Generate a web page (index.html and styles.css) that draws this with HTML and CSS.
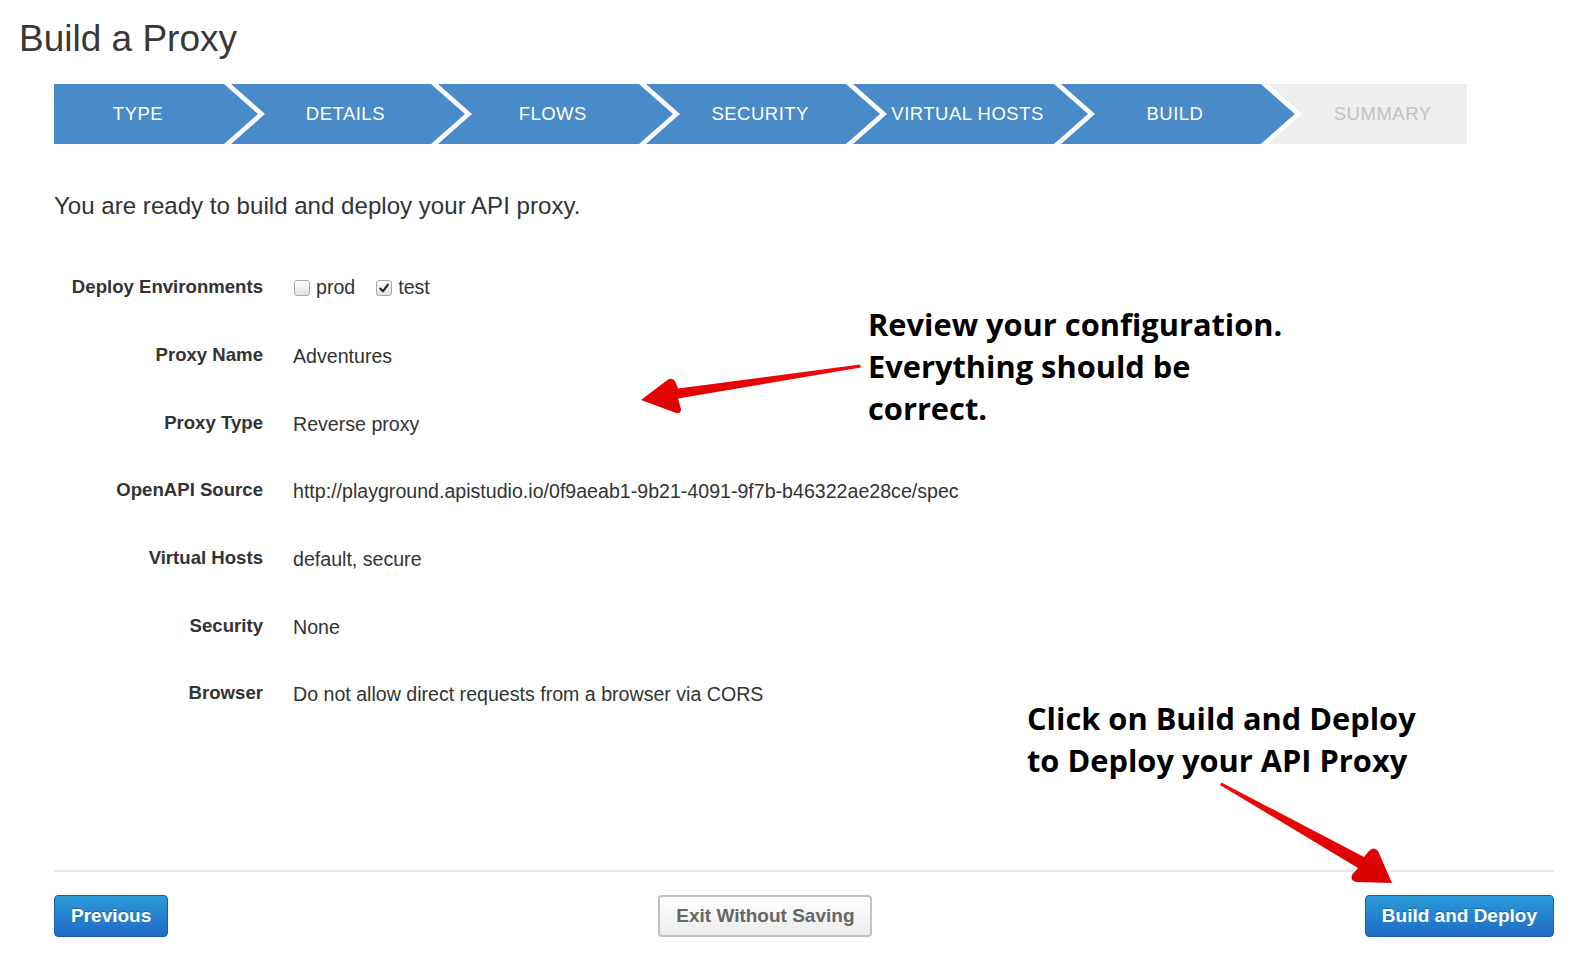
FILE: index.html
```html
<!DOCTYPE html>
<html>
<head>
<meta charset="utf-8">
<title>Build a Proxy</title>
<link rel="stylesheet" href="styles.css">
</head>
<body>
<div class="page">
  <h1 class="title">Build a Proxy</h1>
  <div class="content">
    <div class="wizard">
      <div class="step">TYPE<svg class="chev" viewBox="0 0 44 60" width="44" height="60"><polygon class="next-blue" points="0,0 44,0 44,60 0,60 34,30"/><polygon class="stripe" points="0,0 7,0 41,30 7,60 0,60 34,30"/></svg></div>
      <div class="step">DETAILS<svg class="chev" viewBox="0 0 44 60" width="44" height="60"><polygon class="next-blue" points="0,0 44,0 44,60 0,60 34,30"/><polygon class="stripe" points="0,0 7,0 41,30 7,60 0,60 34,30"/></svg></div>
      <div class="step">FLOWS<svg class="chev" viewBox="0 0 44 60" width="44" height="60"><polygon class="next-blue" points="0,0 44,0 44,60 0,60 34,30"/><polygon class="stripe" points="0,0 7,0 41,30 7,60 0,60 34,30"/></svg></div>
      <div class="step">SECURITY<svg class="chev" viewBox="0 0 44 60" width="44" height="60"><polygon class="next-blue" points="0,0 44,0 44,60 0,60 34,30"/><polygon class="stripe" points="0,0 7,0 41,30 7,60 0,60 34,30"/></svg></div>
      <div class="step">VIRTUAL HOSTS<svg class="chev" viewBox="0 0 44 60" width="44" height="60"><polygon class="next-blue" points="0,0 44,0 44,60 0,60 34,30"/><polygon class="stripe" points="0,0 7,0 41,30 7,60 0,60 34,30"/></svg></div>
      <div class="step">BUILD<svg class="chev" viewBox="0 0 44 60" width="44" height="60"><polygon class="next-gray" points="0,0 44,0 44,60 0,60 34,30"/><polygon class="stripe" points="0,0 7,0 41,30 7,60 0,60 34,30"/></svg></div>
      <div class="step step-todo">SUMMARY</div>
    </div>

    <p class="intro">You are ready to build and deploy your API proxy.</p>

    <div class="summary">
      <div class="label">Deploy Environments</div>
      <div class="value envs">
        <span class="cb"></span><span class="cb-text">prod</span>
        <span class="cb cb-on"><svg viewBox="0 0 14 14" width="14" height="14"><path d="M3.3 7.5 L5.9 10.3 L10.9 3.6" fill="none" stroke="#222" stroke-width="2.1" stroke-linecap="round" stroke-linejoin="round"/></svg></span><span class="cb-text">test</span>
      </div>
      <div class="label">Proxy Name</div>
      <div class="value">Adventures</div>
      <div class="label">Proxy Type</div>
      <div class="value">Reverse proxy</div>
      <div class="label">OpenAPI Source</div>
      <div class="value">http://playground.apistudio.io/0f9aeab1-9b21-4091-9f7b-b46322ae28ce/spec</div>
      <div class="label">Virtual Hosts</div>
      <div class="value">default, secure</div>
      <div class="label">Security</div>
      <div class="value">None</div>
      <div class="label">Browser</div>
      <div class="value">Do not allow direct requests from a browser via CORS</div>
    </div>

    <div class="footer">
      <button class="btn btn-primary">Previous</button>
      <button class="btn btn-default btn-exit">Exit Without Saving</button>
      <button class="btn btn-primary btn-deploy">Build and Deploy</button>
    </div>
  </div>

  <div class="note note-review">Review your configuration.<br>Everything should be<br>correct.</div>
  <div class="note note-click">Click on Build and Deploy<br>to Deploy your API Proxy</div>

  <svg class="arrows" viewBox="0 0 1574 970" width="1574" height="970">
    <defs>
      <linearGradient id="redg" x1="0" y1="0" x2="0" y2="1">
        <stop offset="0" stop-color="#f00a0a"/>
        <stop offset="1" stop-color="#d80000"/>
      </linearGradient>
    </defs>
    <path fill="url(#redg)" d="M860,364.5 L678,388.5 L676,383 Q673,377 668,379.5 L641,400 L675,412.5 Q681,414.5 681,409 L678,398.5 L861,367.5 Z"/>
    <path fill="url(#redg)" d="M1221.5,782.5 L1364,857 L1369,851 Q1374,846 1378,851 L1392,883 L1357,882 Q1350,881 1352,875 L1358,868 L1220,785 Z"/>
  </svg>
</div>
</body>
</html>
```

FILE: styles.css
```css
html, body {
  margin: 0;
  padding: 0;
  background: #ffffff;
}

.page {
  position: relative;
  width: 1574px;
  height: 970px;
  overflow: hidden;
  font-family: "Liberation Sans", Arial, Helvetica, sans-serif;
  color: #333333;
}

.title {
  margin: 0;
  padding: 20px 0 0 19px;
  font-size: 37px;
  line-height: 37px;
  font-weight: 400;
  color: #383838;
}

.content {
  padding: 27px 20px 0 54px;
}

/* Wizard bar */
.wizard {
  display: flex;
  width: 1413px;
  height: 60px;
}

.step {
  position: relative;
  flex: 0 0 207.4px;
  box-sizing: border-box;
  padding-right: 39.4px;
  display: flex;
  align-items: center;
  justify-content: center;
  background: #488bc8;
  color: #ffffff;
  font-size: 18.5px;
  letter-spacing: 0.5px;
  white-space: nowrap;
}

.step-todo {
  flex: 0 0 168.6px;
  padding-right: 0;
  background: #eeeeee;
  color: #c2c2c2;
}

.chev {
  position: absolute;
  left: 170px;
  top: 0;
  z-index: 1;
  overflow: visible;
}

.next-blue { fill: #488bc8; }
.next-gray { fill: #eeeeee; }
.stripe { fill: #ffffff; }

/* Intro */
.intro {
  margin: 47px 0 0 0;
  font-size: 24.1px;
  line-height: 30px;
  color: #333333;
}

/* Summary grid */
.summary {
  display: grid;
  grid-template-columns: 209px 1fr;
  grid-template-rows: 70px repeat(6, 67.6px);
  column-gap: 30px;
  margin-top: 32px;
  align-items: center;
}

.label {
  text-align: right;
  font-weight: 700;
  font-size: 18.6px;
  color: #333333;
  margin-top: -3px;
}

.value {
  font-size: 19.6px;
  color: #333333;
}

.envs {
  display: flex;
  align-items: center;
  margin-top: -2px;
}

.cb {
  box-sizing: border-box;
  width: 16px;
  height: 16px;
  border: 1px solid #a9a9a9;
  border-radius: 3px;
  background: linear-gradient(#ffffff, #e2e2e2);
  margin-left: 1px;
  margin-right: 6px;
  margin-top: 2px;
  display: inline-flex;
  align-items: center;
  justify-content: center;
}

.cb svg {
  display: block;
}

.cb-on {
  margin-left: 21px;
}

.cb-text {
  font-size: 19.6px;
}

/* Footer */
.footer {
  margin-top: 141px;
  border-top: 2px solid #e8e8e8;
  padding-top: 23px;
  display: flex;
  align-items: center;
}

.btn {
  box-sizing: border-box;
  height: 42px;
  padding: 0 16px;
  border-radius: 4px;
  font-family: "Liberation Sans", Arial, Helvetica, sans-serif;
  font-size: 19px;
  font-weight: 700;
  cursor: pointer;
}

.btn-primary {
  color: #ffffff;
  background: linear-gradient(#2b9bd8, #1f6bc6);
  border: 1px solid #1b5fa6;
  text-shadow: 0 -1px 0 rgba(0, 0, 0, 0.25);
}

.btn-default {
  color: #666666;
  background: linear-gradient(#ffffff, #ebebeb);
  border: 2px solid #bcc3c7;
}

.btn-exit {
  margin-left: 490px;
}

.btn-deploy {
  margin-left: auto;
}

/* Annotations */
.note {
  position: absolute;
  font-family: "Open Sans", "Noto Sans", sans-serif;
  font-weight: 700;
  font-size: 30.8px;
  line-height: 42px;
  color: #000000;
  white-space: nowrap;
}

.note-review {
  left: 868px;
  top: 303px;
}

.note-click {
  left: 1027px;
  top: 697px;
}

.arrows {
  position: absolute;
  left: 0;
  top: 0;
  pointer-events: none;
}
```
